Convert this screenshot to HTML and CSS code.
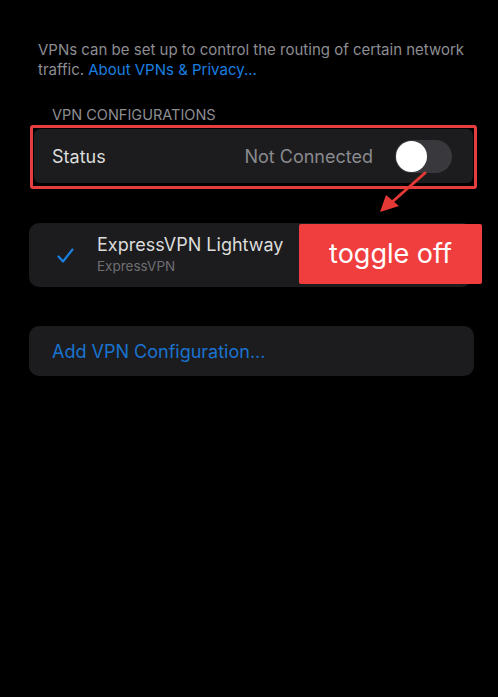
FILE: index.html
```
<!DOCTYPE html>
<html lang="en">
<head>
    <meta charset="UTF-8">
    <meta name="viewport" content="width=device-width, initial-scale=1.0">
    <title>VPN</title>
<link rel="stylesheet" href="styles.css">
</head>
<body>

<div class="screen">
  <p class="intro">VPNs can be set up to control the routing of certain network traffic. <a href="#">About VPNs &amp; Privacy...</a></p>

  <h2 class="section-title">VPN CONFIGURATIONS</h2>

  <div class="highlight">
    <div class="card status-row">
      <span class="label">Status</span>
      <span class="value">Not Connected</span>
      <span class="toggle"><span class="knob"></span></span>
    </div>
  </div>

  <div class="card vpn-row">
    <svg class="check" width="17" height="16" viewBox="0 0 17 16">
      <path d="M1.5 8.5 L6 13.5 L15.5 1.5" fill="none" stroke="#1a7fe0" stroke-width="2.2" stroke-linecap="round" stroke-linejoin="round"/>
    </svg>
    <div class="vpn-text">
      <div class="vpn-name">ExpressVPN Lightway</div>
      <div class="vpn-sub">ExpressVPN</div>
    </div>
    <div class="callout">toggle off</div>
  </div>

  <div class="card add-row">
    <a href="#">Add VPN Configuration...</a>
  </div>

  <svg class="arrow" width="60" height="50" viewBox="0 0 60 50">
    <line x1="48" y1="3" x2="14" y2="33" stroke="#e53935" stroke-width="3" stroke-linecap="round"/>
    <polygon points="3,42 9,25 22,36" fill="#e53935"/>
  </svg>
</div>

</body>
</html>
```

FILE: styles.css
```
body {
  margin: 0;
  background: #000;
  font-family: Inter, "Noto Sans", sans-serif;
  color: #e5e5ea;
}

* { box-sizing: border-box }

.screen {
  position: relative;
  height: 697px;
  padding: 40px 0 0 0;
}

.intro {
  margin: 0 0 0 38px;
  width: 430px;
  font-size: 15px;
  line-height: 20px;
  color: #8d8d92;
}

.intro a {
  color: #1a7fe0;
  text-decoration: none;
}

.section-title {
  margin: 27px 0 0 52px;
  font-size: 14.5px;
  font-weight: 400;
  line-height: 16px;
  color: #8d8d92;
}

.card {
  background: #1c1c1e;
  border-radius: 10px;
}

.highlight {
  margin: 2px 0 0 30px;
  width: 447px;
  height: 64px;
  border: 3px solid #e53e3e;
  border-radius: 3px;
  padding: 1px 1px 3px 1px;
}

.status-row {
  height: 100%;
  display: flex;
  align-items: center;
  padding: 0 21px 0 18px;
  border-radius: 6px;
}

.status-row .label {
  font-size: 18px;
  color: #dcdcdc;
  flex: 1;
}

.status-row .value {
  font-size: 18px;
  color: #8a8a8e;
  margin-right: 22px;
}

.toggle {
  width: 57px;
  height: 33px;
  border-radius: 17px;
  background: #39393d;
  padding: 1px;
}

.knob {
  display: block;
  width: 31px;
  height: 31px;
  border-radius: 50%;
  background: #fff;
}

.vpn-row {
  position: relative;
  margin: 34px 0 0 29px;
  width: 443px;
  height: 64px;
  display: flex;
  align-items: center;
}

.check {
  margin: 2px 23px 0 28px;
}

.vpn-text {
  padding-bottom: 3px;
}

.vpn-name {
  font-size: 18px;
  color: #dcdcdc;
  line-height: 22px;
}

.vpn-sub {
  margin-top: 2px;
  font-size: 13.5px;
  color: #6e6e73;
}

.callout {
  position: absolute;
  left: 270px;
  top: 1px;
  width: 183px;
  height: 60px;
  background: #f03e3e;
  border-radius: 2px;
  color: #fff;
  font-size: 27px;
  display: flex;
  align-items: center;
  justify-content: center;
  padding-bottom: 2px;
}

.add-row {
  margin: 39px 0 0 29px;
  width: 445px;
  height: 50px;
  display: flex;
  align-items: center;
  padding-left: 23px;
}

.add-row a {
  color: #1a73d0;
  font-size: 18px;
  text-decoration: none;
}

.arrow {
  position: absolute;
  left: 377px;
  top: 170px;
}
```
